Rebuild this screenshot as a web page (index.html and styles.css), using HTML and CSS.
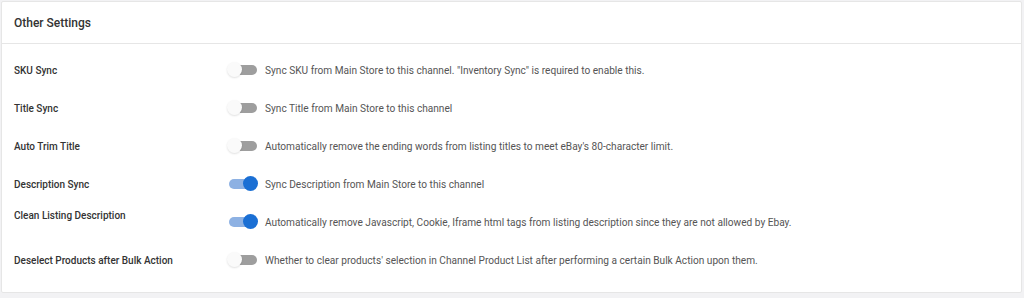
FILE: index.html
```html
<!DOCTYPE html>
<html lang="en">
<head>
    <meta charset="UTF-8">
    <meta name="viewport" content="width=device-width, initial-scale=1.0">
    <title>Other Settings</title>
    <link rel="stylesheet" href="styles.css">
</head>
<body>
    <div class="card">
        <div class="card-header">Other Settings</div>
        <div class="card-body">
            <div class="setting">
                <div class="setting-label">SKU Sync</div>
                <div class="switch"><span class="track"></span><span class="knob"></span></div>
                <div class="setting-desc">Sync SKU from Main Store to this channel. "Inventory Sync" is required to enable this.</div>
            </div>
            <div class="setting">
                <div class="setting-label">Title Sync</div>
                <div class="switch"><span class="track"></span><span class="knob"></span></div>
                <div class="setting-desc">Sync Title from Main Store to this channel</div>
            </div>
            <div class="setting">
                <div class="setting-label">Auto Trim Title</div>
                <div class="switch"><span class="track"></span><span class="knob"></span></div>
                <div class="setting-desc">Automatically remove the ending words from listing titles to meet eBay's 80-character limit.</div>
            </div>
            <div class="setting">
                <div class="setting-label">Description Sync</div>
                <div class="switch on"><span class="track"></span><span class="knob"></span></div>
                <div class="setting-desc">Sync Description from Main Store to this channel</div>
            </div>
            <div class="setting">
                <div class="setting-label label-top">Clean Listing Description</div>
                <div class="switch on"><span class="track"></span><span class="knob"></span></div>
                <div class="setting-desc">Automatically remove Javascript, Cookie, Iframe html tags from listing description since they are not allowed by Ebay.</div>
            </div>
            <div class="setting">
                <div class="setting-label">Deselect Products after Bulk Action</div>
                <div class="switch"><span class="track"></span><span class="knob"></span></div>
                <div class="setting-desc">Whether to clear products' selection in Channel Product List after performing a certain Bulk Action upon them.</div>
            </div>
        </div>
    </div>
</body>
</html>
```

FILE: styles.css
```css
body {
    font-family: Roboto, "Liberation Sans", Arial, sans-serif;
    background-color: #f2f2f4;
    margin: 0;
    padding: 1px 2px 0 1px;
}

.card {
    background-color: white;
    border: 1px solid #e6e6e6;
    border-radius: 2px;
}

.card-header {
    height: 41px;
    padding: 0 12px;
    display: flex;
    align-items: center;
    font-size: 12px;
    font-weight: 500;
    color: #333;
    border-bottom: 1px solid #e6e6e6;
}

.card-body {
    padding: 7px 0 13px 0;
}

.setting {
    display: grid;
    grid-template-columns: 213px 38px 1fr;
    align-items: center;
    height: 38px;
    padding-left: 12px;
}

.setting-label {
    font-size: 10px;
    font-weight: 500;
    color: #333;
}

.label-top {
    align-self: start;
    padding-top: 7px;
}

.setting-desc {
    font-size: 10.15px;
    color: #555;
}

.switch {
    position: relative;
    width: 32px;
    height: 16px;
}

.switch .track {
    position: absolute;
    left: 6px;
    top: 3px;
    width: 24px;
    height: 10px;
    border-radius: 5px;
    background-color: #9e9e9e;
}

.switch .knob {
    position: absolute;
    left: 0;
    top: 0;
    width: 15px;
    height: 15px;
    border-radius: 50%;
    background-color: #fafafa;
    box-shadow: 0 1px 2px rgba(0, 0, 0, 0.12);
}

.switch.on .track {
    left: 2px;
    background-color: #8db1e3;
}

.switch.on .knob {
    left: 16px;
    background-color: #1a6fd4;
    box-shadow: none;
}
```
